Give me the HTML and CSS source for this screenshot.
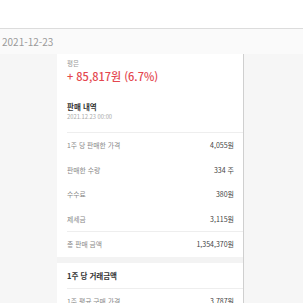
FILE: index.html
```html
<!DOCTYPE html>
<html lang="ko">
<head>
<meta charset="utf-8">
<link rel="stylesheet" href="styles.css">
</head>
<body>
<div class="topbar"></div>
<div class="dateline">2021-12-23</div>
<div class="main">
  <div class="side"></div>
  <div class="card">
    <div class="summary">
      <div class="label">평은</div>
      <div class="profit">+ 85,817원 (6.7%)</div>
      <div class="heading">판매 내역</div>
      <div class="stamp">2021.12.23 00:00</div>
    </div>
    <div class="group">
      <div class="row"><span>1주 당 판매한 가격</span><span class="val">4,055원</span></div>
      <div class="row"><span>판매한 수량</span><span class="val">334 주</span></div>
      <div class="row"><span>수수료</span><span class="val">380원</span></div>
      <div class="row"><span>제세금</span><span class="val">3,115원</span></div>
    </div>
    <div class="group last">
      <div class="row"><span>총 판매 금액</span><span class="val">1,354,370원</span></div>
    </div>
    <div class="band"></div>
    <div class="section-title">1주 당 거래금액</div>
    <div class="group last">
      <div class="row"><span>1주 평균 구매 가격</span><span class="val">3,787원</span></div>
    </div>
  </div>
  <div class="side rest"></div>
</div>
</body>
</html>
```

FILE: styles.css
```css
html, body {
  margin: 0;
  padding: 0;
  background: #f6f6f6;
  font-family: "Noto Sans CJK KR", "Noto Sans", sans-serif;
  overflow: hidden;
}
.topbar {
  height: 28px;
  background: #fff;
  border-bottom: 1px solid #dcdcdc;
}
.dateline {
  height: 25px;
  line-height: 25px;
  padding-left: 2px;
  font-size: 10px;
  color: #9a9a9a;
  background: #fafafa;
}
.main {
  display: flex;
  height: 260px;
}
.side {
  width: 57px;
  background: #f6f6f6;
}
.side.rest {
  flex: 1;
  border-left: 1px solid #cfcfcf;
}
.card {
  width: 186px;
  background: #fff;
}
.summary {
  padding: 5px 0 10px 10px;
  border-bottom: 1px solid #eeeeee;
  margin-left: 10px;
  padding-left: 0;
}
.label {
  font-size: 6.5px;
  line-height: 9px;
  color: #9a9a9a;
}
.profit {
  font-size: 11px;
  line-height: 16px;
  color: #e4474f;
  font-weight: 500;
}
.heading {
  margin-top: 17px;
  font-size: 7.5px;
  line-height: 11px;
  font-weight: 700;
  color: #333;
}
.stamp {
  font-size: 5.8px;
  line-height: 10px;
  color: #aaa;
}
.group {
  margin-left: 10px;
  border-bottom: 1px solid #eeeeee;
}
.group.last {
  border-bottom: none;
}
.row {
  display: flex;
  justify-content: space-between;
  height: 24.5px;
  line-height: 24.5px;
  padding-right: 9px;
  font-size: 6.8px;
  color: #888;
}
.val {
  color: #444;
  font-size: 7px;
}
.band {
  height: 6px;
  background: #f3f3f3;
}
.section-title {
  margin-left: 10px;
  height: 25px;
  line-height: 25px;
  font-size: 7.5px;
  font-weight: 700;
  color: #333;
  border-bottom: 1px solid #eeeeee;
}
```
